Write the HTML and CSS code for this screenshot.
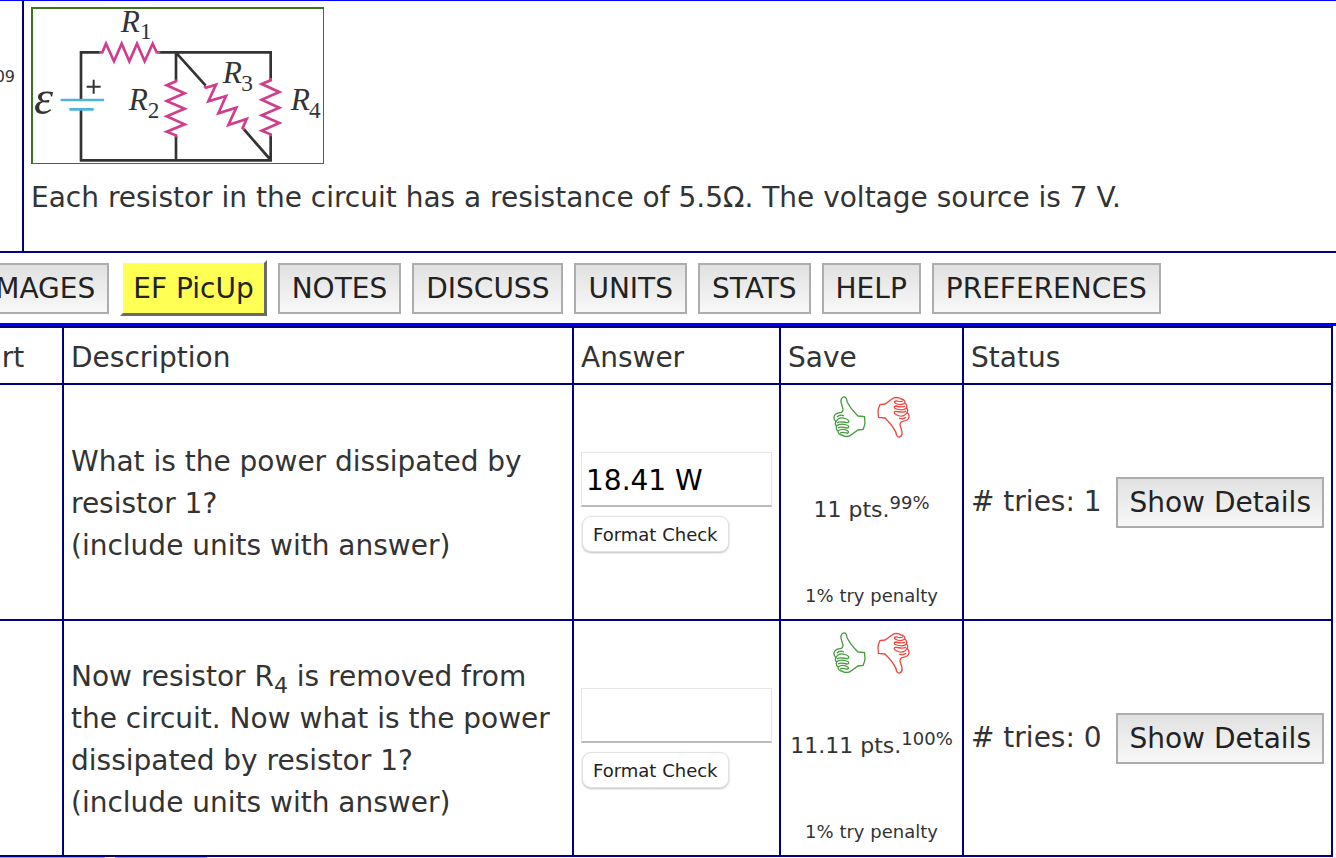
FILE: index.html
```
<!DOCTYPE html>
<html lang="en">
<head>
    <meta charset="UTF-8">
    <meta name="viewport" content="width=device-width, initial-scale=1.0">
    <title>Homework</title>
    <link rel="stylesheet" href="styles.css">
</head>
<body>
    <main>
        <section class="question">
            <div class="question-number">09</div>
            <div class="question-body">
                <svg class="circuit" viewBox="99 27 870 462" role="img" aria-label="Circuit diagram">
                    <g class="wire">
                        <path d="M300 157H243V298M243 330V481H812V406M478 157H812V240M528 157V242M528 408V481M530 160L617 257M731 387L812 480"/>
                        <path class="plus" d="M260 260H302M281 239V281"/>
                    </g>
                    <path class="battery" d="M182 300H312M208 328H281"/>
                    <g class="resistor">
                        <path d="M297 157H307L318 131L342 184L365 131L388 184L411 131L434 184L458 131L470 157H481"/>
                        <path d="M528 238V244L500 256L554 280L500 303L554 326L500 349L554 373L500 395L528 406V412"/>
                        <path d="M812 234V241L785 252L838 276L785 299L838 323L785 346L838 369L785 392L812 403V409"/>
                        <path d="M613 258L618 263L648 254L625 304L678 288L655 340L709 323L685 375L740 357L728 384L733 390"/>
                    </g>
                    <text class="emf" x="102" y="342">ε</text>
                    <text x="362" y="96">R<tspan class="sub" x="420" y="118">1</tspan></text>
                    <text x="386" y="330">R<tspan class="sub" x="443" y="354">2</tspan></text>
                    <text x="668" y="249">R<tspan class="sub" x="724" y="273">3</tspan></text>
                    <text x="872" y="330">R<tspan class="sub" x="927" y="353">4</tspan></text>
                </svg>
                <p>Each resistor in the circuit has a resistance of 5.5Ω. The voltage source is 7 V.</p>
            </div>
        </section>
        <nav class="toolbar">
            <button type="button">IMAGES</button>
            <button type="button" class="picup">EF PicUp</button>
            <button type="button">NOTES</button>
            <button type="button">DISCUSS</button>
            <button type="button">UNITS</button>
            <button type="button">STATS</button>
            <button type="button">HELP</button>
            <button type="button">PREFERENCES</button>
        </nav>
        <table>
            <thead>
                <tr>
                    <th class="part">Part</th>
                    <th>Description</th>
                    <th class="answer">Answer</th>
                    <th class="save">Save</th>
                    <th class="status">Status</th>
                </tr>
            </thead>
            <tbody>
                <tr>
                    <td></td>
                    <td class="description"><label for="answer-a">What is the power dissipated by resistor 1?<br>(include units with answer)</label></td>
                    <td>
                        <input type="text" id="answer-a" value="18.41 W">
                        <button type="button" class="format-check">Format Check</button>
                    </td>
                    <td>
                        <div class="save-content">
                            <div class="thumbs">
                                <svg class="thumb up" viewBox="0 0 33 42"><use href="#thumb"/></svg>
                                <svg class="thumb down" viewBox="0 0 33 42"><use href="#thumb"/></svg>
                            </div>
                            <p class="points">11 pts.<sup>99%</sup></p>
                            <p class="penalty">1% try penalty</p>
                        </div>
                    </td>
                    <td>
                        <div class="tries"><span># tries: 1</span><button type="button">Show Details</button></div>
                    </td>
                </tr>
                <tr>
                    <td></td>
                    <td class="description"><label for="answer-b">Now resistor R<sub>4</sub> is removed from the circuit. Now what is the power dissipated by resistor 1?<br>(include units with answer)</label></td>
                    <td>
                        <input type="text" id="answer-b">
                        <button type="button" class="format-check">Format Check</button>
                    </td>
                    <td>
                        <div class="save-content">
                            <div class="thumbs">
                                <svg class="thumb up" viewBox="0 0 33 42"><use href="#thumb"/></svg>
                                <svg class="thumb down" viewBox="0 0 33 42"><use href="#thumb"/></svg>
                            </div>
                            <p class="points">11.11 pts.<sup>100%</sup></p>
                            <p class="penalty">1% try penalty</p>
                        </div>
                    </td>
                    <td>
                        <div class="tries"><span># tries: 0</span><button type="button">Show Details</button></div>
                    </td>
                </tr>
            </tbody>
        </table>
        <div class="tabs"><span></span><span></span></div>
    </main>
    <svg class="symbols">
        <symbol id="thumb" viewBox="0 0 33 42">
            <path d="M10.5 1C8 2 7.500 5 8.500 8L10 13C10 15 9 16.500 7 16.700C4 17 1.500 18 1 21C.7 23 1.500 24.500 3 25.500C2 27 2.500 29 3.500 30C3 32 3.500 34 5 35C5 37.500 7 39 9 39C11 41 16 41 18 39L25 34L30 33.500C31 31 32 29 32 26.500L31.500 20.500L25 20C22 17 18 13 16 9C14.500 7 13.500 5 13.500 3C13 1.500 12 .8 10.500 1Z"/>
            <path d="M3 25.500C5 22 8 21 12 22.500C15 23.500 17 25 15 26.500C12 27 7 24.500 4 27M3.500 30C6 27.500 10 28 13.500 29C17 30 16 32 14 32C10 31 7 30.500 5 32M5 35C8 33 11 33 14 34.500C17 36 15 37.500 13 37C10 36 8 36 7 37.500M4 21C6 19 9 19 11 20"/>
        </symbol>
    </svg>
</body>
</html>
```
FILE: styles.css
```
*, ::before, ::after {
    box-sizing: border-box;
}

body {
    margin: 0;
    overflow: hidden;
    background-color: #fff;
    color: #333;
    font-family: Verdana, "DejaVu Sans", sans-serif;
    font-size: 28px;
    line-height: 42px;
}

p {
    margin: 0;
}

button, input {
    font-family: inherit;
    font-size: 28px;
}

/* the sheet is wider than the window and starts off its left edge */
main {
    margin-left: -40px;
}

.question {
    display: flex;
    border-top: 1px solid #00f;
    border-bottom: 2px solid #000080;
}

.question-number {
    width: 64px;
    padding: 64px 7px 0 0;
    border-right: 2px solid #000080;
    font-size: 16px;
    line-height: 24px;
    text-align: right;
}

.question-body {
    flex: 1;
    padding: 6px 7px 32px;
}

.circuit {
    display: block;
    width: 293px;
    height: 157px;
    margin-bottom: 13px;
    border: solid #38761d;
    border-width: 2px 1px 1px 2px;
}

.circuit path {
    fill: none;
}

.circuit text {
    fill: #333;
    font-family: "Liberation Serif", serif;
    font-size: 94px;
    font-style: italic;
}

.circuit .sub {
    font-size: 70px;
    font-style: normal;
}

.circuit .emf {
    font-size: 145px;
}

.wire {
    stroke: #333;
    stroke-width: 8;
}

.wire .plus {
    stroke-width: 6;
}

.battery {
    stroke: #4db3e0;
    stroke-width: 8;
}

.resistor {
    stroke: #d13d8d;
    stroke-width: 8;
}

.toolbar {
    display: flex;
    align-items: center;
    gap: 11px;
    height: 73px;
    padding-left: 13px;
    border-bottom: 3px solid #00f;
}

.toolbar button, .tries button {
    height: 51px;
    padding: 0 12px;
    border: 2px solid #adadad;
    background: linear-gradient(#e1e1e1, #f8f8f8);
    color: #222;
    white-space: nowrap;
}

.toolbar .picup {
    height: 56px;
    padding: 0 10px;
    border: 3px solid #6b6b6b;
    border-top-color: transparent;
    border-left-color: transparent;
    background: #ffff54;
    background-clip: padding-box;
}

.tries button {
    padding: 0 11px;
}

table {
    width: calc(100% - 3px);
    border-collapse: collapse;
    table-layout: fixed;
}

th, td {
    padding: 6px 7px;
    border: 2px solid #000080;
    text-align: left;
}

th {
    height: 57px;
    padding-top: 9px;
    padding-bottom: 4px;
    font-weight: normal;
}

td {
    height: 236px;
}

td.description {
    padding-top: 10px;
}

.part {
    width: 102px;
}

.answer {
    width: 207px;
}

.save {
    width: 183px;
}

.status {
    width: 369px;
}

sub {
    font-size: 22px;
    line-height: 0;
}

sup {
    font-size: 18px;
    line-height: 0;
}

td input {
    display: block;
    width: 100%;
    height: 55px;
    margin-bottom: 9px;
    padding: 3px 4px 0;
    border: 1px solid #e6e6e6;
    border-bottom: 2px solid #bbb;
    color: #000;
}

.format-check {
    display: block;
    height: 36px;
    margin-left: 1px;
    padding: 0 10px;
    border: 1px solid #e2e2e2;
    border-radius: 9px;
    background: #fff;
    box-shadow: 0 1px 2px rgba(0, 0, 0, 0.25);
    color: #222;
    font-size: 18px;
    white-space: nowrap;
}

.save-content {
    display: flex;
    flex-direction: column;
    align-items: center;
    justify-content: space-between;
    height: 220px;
    padding: 4px 0 2px;
    white-space: nowrap;
}

.thumbs {
    display: flex;
    gap: 11px;
}

.thumb {
    width: 33px;
    height: 42px;
    fill: none;
    stroke: #459a3c;
    stroke-width: 1.3;
}

.thumb.down {
    stroke: #f0453c;
    transform: rotate(180deg);
}

.points {
    font-size: 22px;
}

.penalty {
    font-size: 18px;
    line-height: 28px;
}

.tries {
    display: flex;
    align-items: center;
    justify-content: space-between;
    white-space: nowrap;
}

.tabs {
    display: flex;
    gap: 10px;
}

.tabs span {
    width: 92px;
    height: 1px;
    background: #a0a0e0;
}

.tabs span:first-child {
    width: 145px;
}

.symbols {
    display: none;
}
```
